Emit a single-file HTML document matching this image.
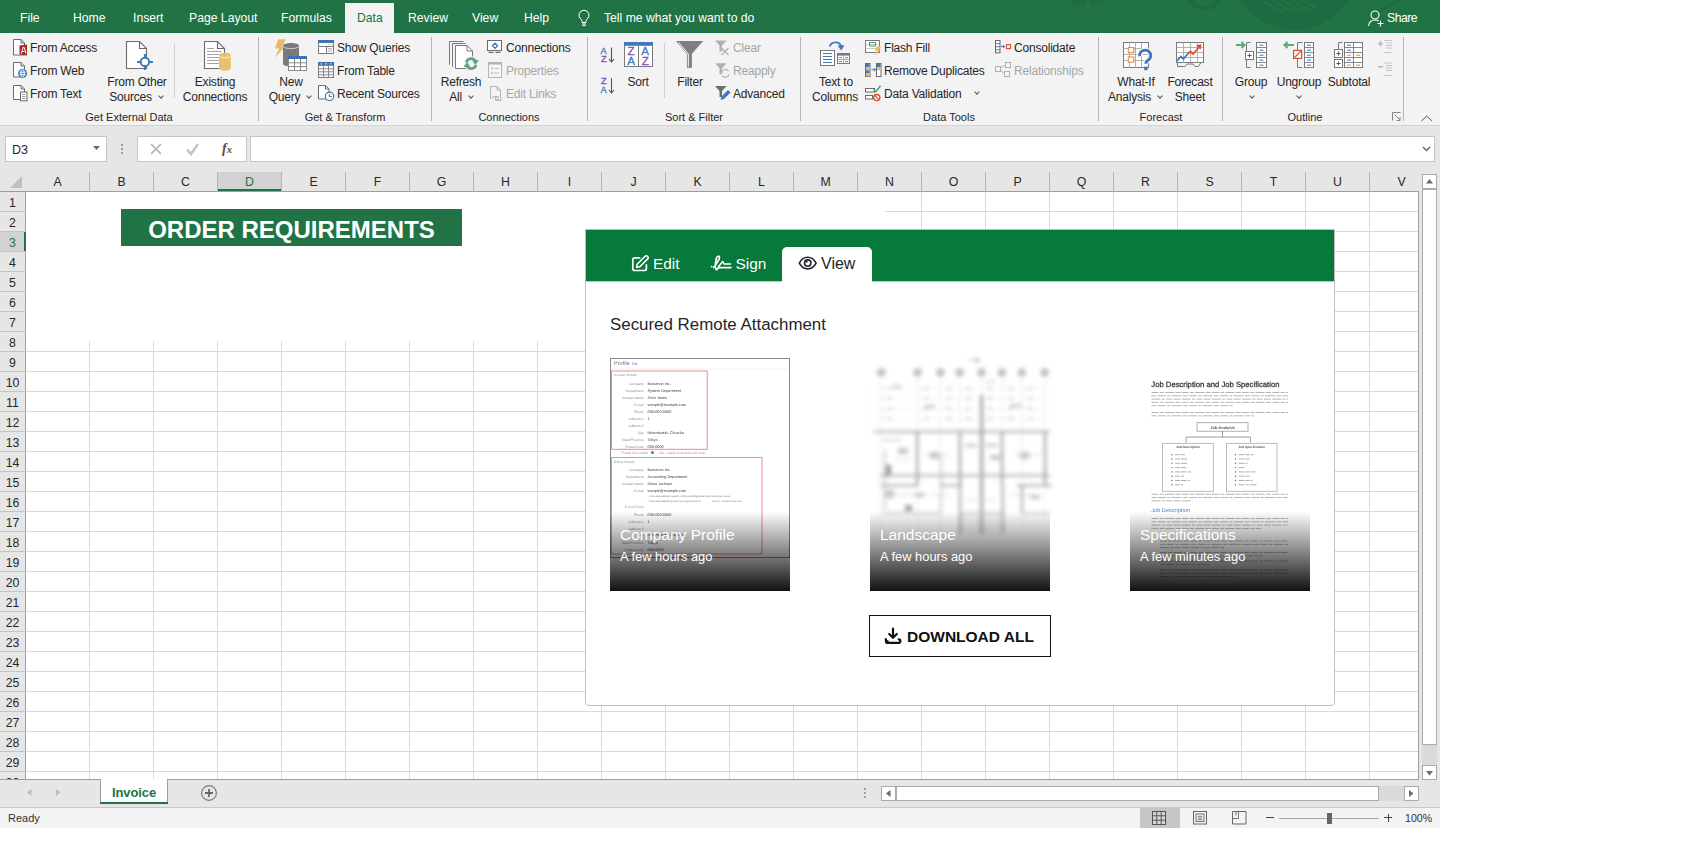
<!DOCTYPE html>
<html><head><meta charset="utf-8">
<style>
*{margin:0;padding:0;box-sizing:border-box}
html,body{width:1694px;height:863px;overflow:hidden;background:#fff;font-family:"Liberation Sans",sans-serif;color:#262626}
.a{position:absolute}
svg{position:absolute;overflow:visible}
#win{position:absolute;left:0;top:0;width:1440px;height:828px;background:#e6e6e6;overflow:hidden}
#tabbar{position:absolute;left:0;top:0;width:1440px;height:33px;background:#217346;overflow:hidden}
.tab{position:absolute;top:12px;font-size:12.2px;line-height:1;color:#fff;white-space:nowrap}
#ribbon{position:absolute;left:0;top:33px;width:1440px;height:93px;background:#f3f3f3;border-bottom:1px solid #d4d4d4}
.t{position:absolute;font-size:12px;letter-spacing:-0.2px;line-height:1;color:#262626;white-space:nowrap}
.c{position:absolute;width:120px;text-align:center;font-size:12px;letter-spacing:-0.2px;line-height:1;color:#262626;white-space:nowrap}
.dis{color:#a6a6a6}
.g{font-size:11px;letter-spacing:0}
.ch{position:absolute;top:176px;font-size:12.3px;line-height:1;text-align:center}
.rh{position:absolute;left:0;width:25px;padding-top:5px;font-size:12.3px;line-height:1;text-align:center}
.sep{position:absolute;top:37px;width:1px;height:84px;background:#b4b4b4}
.chev{display:inline-block;width:4px;height:4px;border-right:1px solid #555;border-bottom:1px solid #555;transform:rotate(45deg);margin-left:7px;position:relative;top:-3px}
.chv{position:absolute;width:4px;height:4px;border-right:1px solid #555;border-bottom:1px solid #555;transform:rotate(45deg)}
</style></head><body>
<div id="win">
 <div id="tabbar">
  <svg width="1440" height="33" style="left:0;top:0">
   <g fill="#1f6b41">
    <circle cx="1294" cy="-33.6" r="63.6"/>
    <rect x="1071" y="0" width="15" height="5"/>
    <rect x="1091" y="0" width="4" height="5"/>
    <rect x="1098" y="0" width="2" height="4"/>
    <rect x="1102" y="0" width="2" height="3"/>
   </g>
   <circle cx="1204.5" cy="-8.5" r="16.5" fill="none" stroke="#1f6b41" stroke-width="5"/>
   <g stroke="#217346" stroke-width="2.4">
    <line x1="1258" y1="-2" x2="1282" y2="12"/><line x1="1266" y1="-4" x2="1292" y2="12"/>
    <line x1="1274" y1="-4" x2="1302" y2="12"/><line x1="1284" y1="-4" x2="1310" y2="10"/><line x1="1294" y1="-4" x2="1316" y2="8"/>
   </g>
   <line x1="1402" y1="-1" x2="1380" y2="10" stroke="#1f6b41" stroke-width="3.5"/>
  </svg>
  <div class="tab" style="left:20px">File</div>
  <div class="tab" style="left:73px">Home</div>
  <div class="tab" style="left:133px">Insert</div>
  <div class="tab" style="left:189px">Page Layout</div>
  <div class="tab" style="left:281px">Formulas</div>
  <div class="a" style="left:345px;top:3px;width:49px;height:30px;background:#f3f3f3"></div>
  <div class="tab" style="left:357px;color:#217346">Data</div>
  <div class="tab" style="left:408px">Review</div>
  <div class="tab" style="left:472px">View</div>
  <div class="tab" style="left:524px">Help</div>
  <svg width="14" height="18" style="left:577px;top:9px" viewBox="0 0 14 18"><path d="M7 1.2a5 5 0 0 0-3 9c.6.5 1 1.2 1 2v1.3h4v-1.3c0-.8.4-1.5 1-2a5 5 0 0 0-3-9z" fill="none" stroke="#fff" stroke-width="1"/><path d="M5 15h4M5.5 16.6h3" stroke="#fff" stroke-width="1"/></svg>
  <div class="tab" style="left:604px">Tell me what you want to do</div>
  <svg width="18" height="18" style="left:1367px;top:9px" viewBox="0 0 18 18"><circle cx="8" cy="6" r="4" fill="none" stroke="#fff" stroke-width="1.1"/><path d="M1.5 17c.5-3.5 3-6 6.5-6 1.5 0 2.6.4 3.6 1" fill="none" stroke="#fff" stroke-width="1.1"/><path d="M13.5 11.5v6M10.5 14.5h6" stroke="#fff" stroke-width="1.1"/></svg>
  <div class="tab" style="left:1387px;letter-spacing:-0.5px">Share</div>
 </div>
 <div id="ribbon"></div>
 <!-- RIBBON_CONTENT -->
 <div class="sep" style="left:258px"></div>
 <div class="sep" style="left:431px"></div>
 <div class="sep" style="left:587px"></div>
 <div class="sep" style="left:800px"></div>
 <div class="sep" style="left:1098px"></div>
 <div class="sep" style="left:1222px"></div>
 <div class="sep" style="left:1403px"></div>
 <div class="a" style="left:174px;top:43px;width:1px;height:55px;background:#d0d0d0"></div>
 <div class="a" style="left:664px;top:43px;width:1px;height:55px;background:#d0d0d0"></div>
 <!-- Get External Data -->
 <div class="t" style="left:30px;top:41.5px">From Access</div>
 <div class="t" style="left:30px;top:64.6px">From Web</div>
 <div class="t" style="left:30px;top:88.3px">From Text</div>
 <div class="c" style="left:77px;top:75.6px">From Other</div>
 <div class="c" style="left:76px;top:91px">Sources<span class="chev"></span></div>
 <div class="c" style="left:155px;top:75.6px">Existing</div>
 <div class="c" style="left:155px;top:91px">Connections</div>
 <div class="c g" style="left:69px;top:111.5px">Get External Data</div>
 <!-- Get & Transform -->
 <div class="c" style="left:231px;top:75.6px">New</div>
 <div class="c" style="left:230px;top:91px">Query<span class="chev"></span></div>
 <div class="t" style="left:337px;top:41.5px">Show Queries</div>
 <div class="t" style="left:337px;top:64.6px">From Table</div>
 <div class="t" style="left:337px;top:88.3px">Recent Sources</div>
 <div class="c g" style="left:285px;top:111.5px">Get &amp; Transform</div>
 <!-- Connections -->
 <div class="c" style="left:401px;top:75.6px">Refresh</div>
 <div class="c" style="left:401px;top:91px">All<span class="chev"></span></div>
 <div class="t" style="left:506px;top:41.5px">Connections</div>
 <div class="t dis" style="left:506px;top:64.6px">Properties</div>
 <div class="t dis" style="left:506px;top:88.3px">Edit Links</div>
 <div class="c g" style="left:449px;top:111.5px">Connections</div>
 <!-- Sort & Filter -->
 <div class="c" style="left:578px;top:75.6px">Sort</div>
 <div class="c" style="left:630px;top:75.6px">Filter</div>
 <div class="t dis" style="left:733px;top:41.5px">Clear</div>
 <div class="t dis" style="left:733px;top:64.6px">Reapply</div>
 <div class="t" style="left:733px;top:88.3px">Advanced</div>
 <div class="c g" style="left:634px;top:111.5px">Sort &amp; Filter</div>
 <!-- Data Tools -->
 <div class="c" style="left:776px;top:75.6px">Text to</div>
 <div class="c" style="left:775px;top:91px">Columns</div>
 <div class="t" style="left:884px;top:41.5px">Flash Fill</div>
 <div class="t" style="left:884px;top:64.6px">Remove Duplicates</div>
 <div class="t" style="left:884px;top:88.3px">Data Validation</div>
 <div class="chv" style="left:975px;top:90px"></div>
 <div class="t" style="left:1014px;top:41.5px">Consolidate</div>
 <div class="t dis" style="left:1014px;top:64.6px">Relationships</div>
 <div class="c g" style="left:889px;top:111.5px">Data Tools</div>
 <!-- Forecast -->
 <div class="c" style="left:1076px;top:75.6px">What-If</div>
 <div class="c" style="left:1075px;top:91px">Analysis<span class="chev"></span></div>
 <div class="c" style="left:1130px;top:75.6px">Forecast</div>
 <div class="c" style="left:1130px;top:91px">Sheet</div>
 <div class="c g" style="left:1101px;top:111.5px">Forecast</div>
 <!-- Outline -->
 <div class="c" style="left:1191px;top:75.6px">Group</div>
 <div class="chv" style="left:1250px;top:94px"></div>
 <div class="c" style="left:1239px;top:75.6px">Ungroup</div>
 <div class="chv" style="left:1297px;top:94px"></div>
 <div class="c" style="left:1289px;top:75.6px">Subtotal</div>
 <div class="c g" style="left:1245px;top:111.5px">Outline</div>
<!-- /RIBBON_CONTENT -->
 <!-- ICONS -->
<svg width="1440" height="126" style="left:0;top:0" shape-rendering="geometricPrecision">
 <defs>
  <path id="doc" d="M0.5 0.5h7l3.5 3.5v11.5h-10.5z"/>
 </defs>
 <!-- From Access -->
 <path d="M13.5 39.5h7.5l3.5 3.5v12h-11z" fill="#fff" stroke="#6a6a6a"/><path d="M21 39.5v3.5h3.5" fill="none" stroke="#6a6a6a"/>
 <path d="M19.5 45.5l7.5-1v11l-7.5-1z" fill="#a4262c"/>
 <path d="M21.3 53.6l1.9-6.4h.9l1.9 6.4M22 51.5h2.4" fill="none" stroke="#fff" stroke-width="1"/>
 <!-- From Web -->
 <path d="M13.5 62.5h7.5l3.5 3.5v11h-11z" fill="#fff" stroke="#6a6a6a"/><path d="M21 62.5v3.5h3.5" fill="none" stroke="#6a6a6a"/>
 <circle cx="22.6" cy="73.4" r="4.6" fill="#4a86c5"/>
 <path d="M19.8 72.3h5.6M19.8 74.5h5.6" stroke="#fff" stroke-width="0.9"/><ellipse cx="22.6" cy="73.4" rx="1.8" ry="3.6" fill="none" stroke="#fff" stroke-width="0.9"/>
 <!-- From Text -->
 <path d="M13.5 85.5h7.5l3.5 3.5v10.5h-11z" fill="#fff" stroke="#6a6a6a"/><path d="M21 85.5v3.5h3.5" fill="none" stroke="#6a6a6a"/>
 <rect x="20.5" y="92" width="6.5" height="8.8" fill="#fff" stroke="#6a6a6a"/>
 <path d="M22 94.5h3.5M22 96.5h3.5M22 98.5h3.5" stroke="#8a8a8a" stroke-width="0.8"/>
 <!-- From Other Sources -->
 <path d="M126.5 41.5h13l7 7v20h-20z" fill="#fff" stroke="#6b6b6b" stroke-width="1.1"/><path d="M139.5 41.5v7h7" fill="none" stroke="#6b6b6b" stroke-width="1.1"/>
 <circle cx="144.9" cy="61.9" r="4.2" fill="#fff" stroke="#3f78b8" stroke-width="2"/>
 <path d="M137 61.9h3.2M149.6 61.9h3.3M144.9 54v3.2M144.9 66.5v3.4" stroke="#3f78b8" stroke-width="2"/>
 <!-- Existing Connections -->
 <path d="M204.5 41.5h13l7 7v20h-20z" fill="#fff" stroke="#6b6b6b" stroke-width="1.1"/><path d="M217.5 41.5v7h7" fill="none" stroke="#6b6b6b" stroke-width="1.1"/>
 <path d="M207 48.5h7M207 51.5h14.5M207 54.5h12M207 57.5h12M207 60.5h12M207 63.5h12" stroke="#9a9a9a" stroke-width="0.9"/>
 <path d="M219 55v13.5a5.9 2.2 0 0 0 11.8 0V55z" fill="#e8c170"/><ellipse cx="224.9" cy="55" rx="5.9" ry="2.2" fill="#e8c170"/>
 <path d="M219.2 56.2a5.9 2.2 0 0 0 11.4 0" fill="none" stroke="#fff" stroke-width="0.7"/>
 <!-- New Query -->
 <path d="M278.3 39.2h7.5l-4 7.8h2.8l-9.5 10.7 4-9.1h-4z" fill="#e8b968"/>
 <path d="M283 45.5v18.5a8 2.5 0 0 0 16 0V45.5z" fill="#7a7a7a"/><ellipse cx="291" cy="45.5" rx="8" ry="2.5" fill="#7a7a7a"/>
 <path d="M283.3 46.8a8 2.5 0 0 0 15.4 0" fill="none" stroke="#eee" stroke-width="0.7"/>
 <rect x="288" y="56" width="19" height="15" fill="#f3f3f3"/>
 <rect x="288.5" y="56.5" width="18" height="14" fill="#fff" stroke="#8a8a8a"/>
 <rect x="288" y="56" width="19" height="3" fill="#3f72b0"/>
 <path d="M294.5 59v11.5M300.5 59v11.5M288.5 62.8h18M288.5 66.6h18" stroke="#8a8a8a" stroke-width="1"/>
 <!-- Show Queries -->
 <rect x="318.5" y="40.5" width="15" height="13" fill="#fff" stroke="#7a7a7a"/>
 <rect x="318" y="40" width="16" height="3" fill="#3f72b0"/>
 <path d="M318.5 46.5h15M326.5 46.5v7" stroke="#7a7a7a"/>
 <path d="M328 44.8h.8M329.8 44.8h.8M331.6 44.8h.8M328 48.8h4M328 51h4" stroke="#8a8a8a" stroke-width="0.8"/>
 <!-- From Table -->
 <rect x="318.5" y="62.5" width="15" height="15" fill="#fff" stroke="#7a7a7a"/>
 <rect x="318" y="62" width="16" height="3.8" fill="#3f72b0"/>
 <path d="M320.5 63.9h1.6M325.2 63.9h1.6M329.9 63.9h1.6" stroke="#fff" stroke-width="0.9"/>
 <path d="M323.5 65.8v11.7M328.5 65.8v11.7M318.5 68.8h15M318.5 71.8h15M318.5 74.8h15" stroke="#8a8a8a" stroke-width="1"/>
 <!-- Recent Sources -->
 <path d="M318.5 85.5h7l3.5 3.5v10h-10.5z" fill="#fff" stroke="#6a6a6a"/><path d="M325.5 85.5v3.5h3.5" fill="none" stroke="#6a6a6a"/>
 <circle cx="329.5" cy="96.3" r="4.2" fill="#fff" stroke="#3f78b8" stroke-width="1.2"/>
 <path d="M329.3 93.8v2.8h2.6" fill="none" stroke="#555" stroke-width="0.9"/>
 <!-- Refresh All -->
 <path d="M449.5 64.8V41.5h14" fill="none" stroke="#7a7a7a" stroke-width="1"/>
 <path d="M452.5 66.8V43.5h13" fill="none" stroke="#7a7a7a" stroke-width="1"/>
 <path d="M455.5 45.5h11.5l5.5 5.5v17.5h-17z" fill="#fff" stroke="#7a7a7a"/><path d="M467 45.5v5.5h5.5" fill="none" stroke="#7a7a7a"/>
 <circle cx="471.2" cy="63.6" r="7.3" fill="#f3f3f3"/>
 <path d="M466.37 62.31A5.0 5.0 0 0 1 475.73 61.49" fill="none" stroke="#5fa584" stroke-width="2.6"/>
 <path d="M476.03 64.89A5.0 5.0 0 0 1 466.67 65.71" fill="none" stroke="#5fa584" stroke-width="2.6"/>
 <path d="M478.93 60.29L475.33 65.09L472.13 60.09z" fill="#5fa584"/>
 <path d="M463.47 66.91L467.07 62.11L470.27 67.11z" fill="#5fa584"/>
 <!-- Connections -->
 <rect x="487.5" y="40.5" width="14" height="10" fill="#fff" stroke="#6a6a6a"/>
 <path d="M488.5 52.3h5M495.5 52.3h5" stroke="#6a6a6a" stroke-width="1.2"/>
 <path d="M495 43.2l2.6 2.6-2.6 2.6-2.6-2.6z" fill="none" stroke="#3f78b8" stroke-width="1.3"/>
 <!-- Properties disabled -->
 <rect x="488.5" y="62.5" width="13" height="15" fill="#f6f4f6" stroke="#b4b4b4"/>
 <rect x="488" y="62" width="14" height="2.5" fill="#b4b4b4"/>
 <circle cx="492" cy="68.5" r="1" fill="#b4b4b4"/><circle cx="492" cy="73" r="1" fill="none" stroke="#b4b4b4" stroke-width="0.8"/>
 <path d="M494.5 68.5h4.5M494.5 73h4.5" stroke="#b4b4b4" stroke-width="0.9"/>
 <!-- Edit Links disabled -->
 <path d="M490.5 86.5h6.5l3.5 3.5v8" fill="none" stroke="#b4b4b4"/><path d="M490.5 86.5v12.5" stroke="#b4b4b4"/><path d="M497 86.5v3.5h3.5" fill="none" stroke="#b4b4b4"/>
 <path d="M492.5 98.5a2 2 0 0 1 2-2h2a2 2 0 0 1 0 4h-1M501.5 98.5a2 2 0 0 1-2 2h-2a2 2 0 0 1 0-4h1" fill="none" stroke="#b4b4b4" stroke-width="1.1"/>
 <!-- AZ sort -->
 <text x="600.6" y="53.8" font-family="Liberation Sans" font-size="9.3" fill="#3f78bd" stroke="#3f78bd" stroke-width="0.3">A</text>
 <text x="601" y="62" font-family="Liberation Sans" font-size="9.3" fill="#8e4db0" stroke="#8e4db0" stroke-width="0.3">Z</text>
 <path d="M611.5 47.5v14.2M609 59.2l2.5 2.8 2.5-2.8" fill="none" stroke="#555" stroke-width="1.1"/>
 <text x="601" y="84.3" font-family="Liberation Sans" font-size="9.3" fill="#8e4db0" stroke="#8e4db0" stroke-width="0.3">Z</text>
 <text x="600.6" y="93" font-family="Liberation Sans" font-size="9.3" fill="#3f78bd" stroke="#3f78bd" stroke-width="0.3">A</text>
 <path d="M611.5 78.3v14.4M609 90l2.5 2.8 2.5-2.8" fill="none" stroke="#555" stroke-width="1.1"/>
 <!-- Sort -->
 <rect x="624.5" y="42.5" width="28" height="24" fill="#fff" stroke="#7a7a7a"/>
 <rect x="624" y="42" width="29" height="3.8" fill="#3f78bd"/>
 <path d="M638.5 45.8v20.7" stroke="#7a7a7a"/>
 <text x="627.6" y="55.2" font-family="Liberation Sans" font-size="11.6" fill="#8e4db0" stroke="#8e4db0" stroke-width="0.3">Z</text>
 <text x="627.2" y="65.4" font-family="Liberation Sans" font-size="11.6" fill="#3f78bd" stroke="#3f78bd" stroke-width="0.3">A</text>
 <text x="641.3" y="55.2" font-family="Liberation Sans" font-size="11.6" fill="#3f78bd" stroke="#3f78bd" stroke-width="0.3">A</text>
 <text x="641.8" y="65.4" font-family="Liberation Sans" font-size="11.6" fill="#8e4db0" stroke="#8e4db0" stroke-width="0.3">Z</text>
 <!-- Filter -->
 <path d="M676 41h27.2l-11.3 12.8v14h-5v-14z" fill="#7f7f7f"/>
 <path d="M678.8 42.6l9.5 11.4v12.6" fill="none" stroke="#fff" stroke-width="1"/>
 <!-- Clear disabled -->
 <path d="M715 40.5h11.5l-4.5 5v6h-2.5v-6z" fill="#b0b0b0"/>
 <path d="M721.5 48l7 7M728.5 48l-7 7" stroke="#b0b0b0" stroke-width="1.2"/>
 <!-- Reapply disabled -->
 <path d="M715 63.3h11.5l-4.5 5v6h-2.5v-6z" fill="#b0b0b0"/>
 <path d="M721.7 72.5a3.8 3.8 0 0 1 6.8-1.5M729 74.2a3.8 3.8 0 0 1-6.8 1.5" fill="none" stroke="#b8b8b8" stroke-width="1.3"/>
 <!-- Advanced -->
 <path d="M715 86h11.5l-4.5 5v6h-2.5v-6z" fill="#6d6d6d"/>
 <path d="M720.5 100l1-3.5 6.5-6.5 2.5 2.5-6.5 6.5z" fill="#3f78bd"/>
 <!-- Text to Columns -->
 <rect x="820.5" y="50.5" width="14" height="15" fill="#fff" stroke="#7a7a7a"/>
 <path d="M823 53.5h9M823 56.5h9M823 59.5h9M823 62.5h9" stroke="#3f78bd" stroke-width="1"/>
 <rect x="837.5" y="53.5" width="12" height="10" fill="#fff" stroke="#7a7a7a"/>
 <rect x="837" y="53" width="13" height="2.6" fill="#7a7a7a"/>
 <path d="M843.5 55.6v8M837.5 59.5h12" stroke="#9a9a9a" stroke-width="0.8"/>
 <path d="M839 57.7h3M845 57.7h3M839 61.5h3M845 61.5h3" stroke="#3f78bd" stroke-width="0.9"/>
 <path d="M829.7 46.6a6 5.5 0 0 1 11.5 -0.5" fill="none" stroke="#3f78bd" stroke-width="1.8"/>
 <path d="M837.6 45.4l3.6 5.2 3.4-5.4z" fill="#3f78bd"/>
 <!-- Flash Fill -->
 <rect x="865.5" y="40.5" width="14" height="12" fill="#fff" stroke="#7a7a7a"/>
 <path d="M865.5 44.5h14M865.5 48.5h14" stroke="#bbb" stroke-width="0.8"/>
 <rect x="869.5" y="42.5" width="6" height="3.5" fill="none" stroke="#4e9a76" stroke-width="1"/>
 <path d="M876.6 46.2h4.6l-2.4 3.6h2.2l-6.6 5.6 2.4-4.3h-1.9z" fill="#e8c070"/>
 <!-- Remove Duplicates -->
 <rect x="865.5" y="63.5" width="4.5" height="13" fill="#fff" stroke="#6a6a6a"/>
 <rect x="866" y="64" width="3.5" height="3" fill="#3f78bd"/><rect x="866" y="67.2" width="3.5" height="3" fill="#e8b968"/><rect x="866" y="70.3" width="3.5" height="3" fill="#3f78bd"/><rect x="866" y="73.4" width="3.5" height="3" fill="#e8b968"/>
 <rect x="876.5" y="63.5" width="4.5" height="13" fill="#fff" stroke="#6a6a6a"/>
 <rect x="877" y="64" width="3.5" height="3" fill="#3f78bd"/><rect x="877" y="67.2" width="3.5" height="3" fill="#e8b968"/>
 <path d="M871.5 69.7h4M874 68l1.6 1.7-1.6 1.7" fill="none" stroke="#3f78bd" stroke-width="1"/>
 <!-- Data Validation -->
 <rect x="865.5" y="88.5" width="9" height="3.5" fill="#fff" stroke="#6a6a6a"/>
 <rect x="865.5" y="95.5" width="7" height="3.5" fill="#fff" stroke="#6a6a6a"/>
 <path d="M873.5 89.5l2.3 2.3 4.8-6" fill="none" stroke="#4e9a76" stroke-width="1.4"/>
 <circle cx="876.8" cy="97.6" r="3.1" fill="#fff" stroke="#d9512c" stroke-width="1.3"/><path d="M874.7 95.5l4.2 4.2" stroke="#d9512c" stroke-width="1.2"/>
 <!-- Consolidate -->
 <rect x="995.5" y="40.5" width="4.5" height="12.3" fill="#fff" stroke="#6a6a6a" stroke-width="1"/>
 <path d="M995.5 43.6h4.5M995.5 46.7h4.5M995.5 49.8h4.5" stroke="#6a6a6a" stroke-width="0.9"/>
 <path d="M1001 46.5h3.5M1003 45l1.6 1.5-1.6 1.5" fill="none" stroke="#3f78bd" stroke-width="1"/>
 <rect x="1006.5" y="44.6" width="4" height="4" fill="#fff" stroke="#d9512c" stroke-width="1.2"/>
 <!-- Relationships disabled -->
 <rect x="995.5" y="66.5" width="5" height="5" fill="#f6f4f6" stroke="#b0b0b0"/>
 <rect x="1005.5" y="62.5" width="5" height="5" fill="#f6f4f6" stroke="#b0b0b0"/>
 <rect x="1004.5" y="71.5" width="5" height="5" fill="#f6f4f6" stroke="#b0b0b0"/>
 <path d="M1000.5 68l5-3M1000.5 70.5l4 3" stroke="#b0b0b0" stroke-width="0.9"/>
 <!-- What-If -->
 <rect x="1123.5" y="42.5" width="25" height="25" fill="#fff" stroke="#7a7a7a"/>
 <path d="M1129.5 42.5v25M1135.5 42.5v25M1141.5 42.5v25M1123.5 48.5h25M1123.5 54.5h25M1123.5 60.5h25" stroke="#a8a8a8" stroke-width="0.9"/>
 <rect x="1128.3" y="47.5" width="5.5" height="5.2" fill="#fff" stroke="#e28a3c" stroke-width="1.1"/>
 <rect x="1128.3" y="57" width="5.5" height="5.2" fill="#fff" stroke="#e28a3c" stroke-width="1.1"/>
 <path d="M1139.6 56.2a5.6 5.4 0 1 1 8.6 3.9c-1.5 1-2.4 1.7-2.4 3.6" fill="none" stroke="#fff" stroke-width="5"/>
 <path d="M1139.6 56.2a5.6 5.4 0 1 1 8.6 3.9c-1.5 1-2.4 1.7-2.4 3.6" fill="none" stroke="#3f78bd" stroke-width="3"/>
 <rect x="1144.2" y="66.6" width="3.4" height="3.6" fill="#3f78bd"/>
 <!-- Forecast Sheet -->
 <rect x="1176.5" y="42.5" width="27" height="20" fill="#fff" stroke="#7a7a7a"/>
 <path d="M1183.5 42.5v20M1190.5 42.5v20M1197.5 42.5v20M1176.5 47.5h27M1176.5 52.5h27M1176.5 57.5h27" stroke="#a8a8a8" stroke-width="0.9"/>
 <path d="M1177.5 62.5v4h7.5l2-2.5h6l2 2.5h3.5l2.5-4" fill="none" stroke="#7a7a7a"/>
 <path d="M1177 61l4-4.5 2.5 2.5 4-5" fill="none" stroke="#3f78bd" stroke-width="1.8"/>
 <path d="M1187.5 54l3-2.5 2.5 2.5 7-8" fill="none" stroke="#d9512c" stroke-width="1.8"/>
 <path d="M1196 45.2l5.5-1 -0.8 5.5z" fill="#d9512c"/>
 <!-- Group -->
 <path d="M1236 45h8M1241.5 42l3 3-3 3" fill="none" stroke="#5fa584" stroke-width="2"/>
 <path d="M1250.5 42.5h-4v25h4" fill="none" stroke="#7a7a7a"/>
 <rect x="1245.5" y="51.5" width="8" height="8" fill="#fff" stroke="#7a7a7a"/>
 <path d="M1247.5 55.5h4M1249.5 53.5v4" stroke="#555"/>
 <rect x="1256.5" y="42.5" width="10" height="25" fill="#fff" stroke="#7a7a7a"/>
 <path d="M1256.5 47.5h10M1256.5 52.5h10M1256.5 57.5h10M1256.5 62.5h10" stroke="#7a7a7a" stroke-width="0.9"/>
 <path d="M1259.5 45.2h4M1259.5 50.2h4M1259.5 55.2h4M1259.5 60.2h4M1259.5 65.2h4" stroke="#3f78bd" stroke-width="1"/>
 <!-- Ungroup -->
 <path d="M1285 45h9M1287.5 42l-3 3 3 3" fill="none" stroke="#5fa584" stroke-width="2"/>
 <path d="M1302.5 42.5h-5v25h5" fill="none" stroke="#7a7a7a"/>
 <rect x="1293.6" y="50.4" width="8" height="8" fill="#fff" stroke="#d9512c" stroke-width="1.2"/>
 <path d="M1294.5 57.5l6.5-6.5" stroke="#d9512c" stroke-width="1.1"/>
 <rect x="1304.5" y="42.5" width="9" height="25" fill="#fff" stroke="#7a7a7a"/>
 <path d="M1304.5 47.5h9M1304.5 52.5h9M1304.5 57.5h9M1304.5 62.5h9" stroke="#7a7a7a" stroke-width="0.9"/>
 <path d="M1307 45.2h4M1307 50.2h4M1307 55.2h4M1307 60.2h4M1307 65.2h4" stroke="#3f78bd" stroke-width="1"/>
 <!-- Subtotal -->
 <path d="M1338.5 49.5v-7h4" fill="none" stroke="#7a7a7a"/>
 <rect x="1334.5" y="49.5" width="8" height="8" fill="#fff" stroke="#7a7a7a"/><path d="M1336.5 53.5h4M1338.5 51.5v4" stroke="#555"/>
 <rect x="1334.5" y="59.5" width="8" height="8" fill="#fff" stroke="#7a7a7a"/><path d="M1336.5 63.5h4M1338.5 61.5v4" stroke="#555"/>
 <rect x="1344.5" y="42.5" width="18" height="25" fill="#fff" stroke="#7a7a7a"/>
 <path d="M1353.5 42.5v25M1344.5 47.5h18M1344.5 52.5h18M1344.5 57.5h18M1344.5 62.5h18" stroke="#7a7a7a" stroke-width="0.9"/>
 <path d="M1347 45.2h4M1347 50.2h4M1347 60.2h4" stroke="#3f78bd" stroke-width="1"/>
 <path d="M1347 55.2h4M1356 55.2h4M1347 65.2h4M1356 65.2h4" stroke="#e28a3c" stroke-width="1"/>
 <!-- Show/Hide detail disabled -->
 <path d="M1378 43.8h5M1380.5 41.3v5" stroke="#b8b8b8" stroke-width="1.6"/>
 <path d="M1384 40.5h8M1386 43h6M1386 45.5h6M1386 48h6M1384 52.5h8" stroke="#c0c0c0" stroke-width="0.9"/>
 <path d="M1378 66.8h5" stroke="#b8b8b8" stroke-width="1.6"/>
 <path d="M1384 63h8M1386 65.5h6M1386 68h6M1386 70.5h6M1384 75.5h8" stroke="#c0c0c0" stroke-width="0.9"/>
 <!-- dialog launcher & collapse -->
 <path d="M1392.5 120.5v-8h8M1394.5 114.5l5.5 5.5M1400 117v3.5h-3.5" fill="none" stroke="#777" stroke-width="0.9"/>
 <path d="M1421.5 121l5.2-5 5.2 5" fill="none" stroke="#555" stroke-width="1"/>
</svg>
<!-- /ICONS -->
 <!-- FORMULA_BAR -->
 <!-- name box -->
 <div class="a" style="left:5px;top:136px;width:102px;height:26px;background:#fff;border:1px solid #c6c6c6"></div>
 <div class="a" style="left:12px;top:144px;font-size:12.5px;line-height:1;color:#262626">D3</div>
 <svg width="10" height="6" style="left:93px;top:146px"><path d="M0 0h7l-3.5 4z" fill="#6b6b6b"/></svg>
 <div class="a" style="left:121px;top:144px;width:2px;height:2px;background:#9a9a9a"></div>
 <div class="a" style="left:121px;top:148px;width:2px;height:2px;background:#9a9a9a"></div>
 <div class="a" style="left:121px;top:152px;width:2px;height:2px;background:#9a9a9a"></div>
 <div class="a" style="left:137px;top:136px;width:110px;height:26px;background:#fff;border:1px solid #c6c6c6"></div>
 <svg width="14" height="14" style="left:150px;top:143px"><path d="M1 1l10 10M11 1l-10 10" stroke="#b4b4b4" stroke-width="1.7"/></svg>
 <svg width="14" height="14" style="left:186px;top:143px"><path d="M1 6.5l4 4.5 7-10" fill="none" stroke="#c4c4c4" stroke-width="2.6"/></svg>
 <div class="a" style="left:222px;top:142px;font-family:'Liberation Serif',serif;font-style:italic;font-weight:bold;font-size:14px;line-height:1;color:#505050">f<span style="font-size:10.5px">x</span></div>
 <div class="a" style="left:250px;top:136px;width:1185px;height:26px;background:#fff;border:1px solid #c6c6c6"></div>
 <svg width="10" height="7" style="left:1422px;top:146px"><path d="M1 1l3.5 3.5L8 1" fill="none" stroke="#666" stroke-width="1.5"/></svg>
 <!-- column headers -->
 <div class="a" style="left:0;top:172px;width:1420px;height:20px;background:#e6e6e6;border-bottom:1px solid #9e9e9e"></div>
 <svg width="14" height="14" style="left:10px;top:176px"><path d="M12 0v12H0z" fill="#c0c0c0"/></svg>
 <div class="a" style="left:217px;top:172px;width:64px;height:19px;background:#d2d2d2"></div>
 <div class="a" style="left:217px;top:189px;width:65px;height:2px;background:#217346"></div>
 <div class="ch" style="left:26px;width:63px;color:#262626">A</div>
 <div class="a" style="left:89px;top:172px;width:1px;height:21px;background:#b4b4b4"></div>
 <div class="ch" style="left:90px;width:63px;color:#262626">B</div>
 <div class="a" style="left:153px;top:172px;width:1px;height:21px;background:#b4b4b4"></div>
 <div class="ch" style="left:154px;width:63px;color:#262626">C</div>
 <div class="a" style="left:217px;top:172px;width:1px;height:21px;background:#b4b4b4"></div>
 <div class="ch" style="left:218px;width:63px;color:#217346">D</div>
 <div class="a" style="left:281px;top:172px;width:1px;height:21px;background:#b4b4b4"></div>
 <div class="ch" style="left:282px;width:63px;color:#262626">E</div>
 <div class="a" style="left:345px;top:172px;width:1px;height:21px;background:#b4b4b4"></div>
 <div class="ch" style="left:346px;width:63px;color:#262626">F</div>
 <div class="a" style="left:409px;top:172px;width:1px;height:21px;background:#b4b4b4"></div>
 <div class="ch" style="left:410px;width:63px;color:#262626">G</div>
 <div class="a" style="left:473px;top:172px;width:1px;height:21px;background:#b4b4b4"></div>
 <div class="ch" style="left:474px;width:63px;color:#262626">H</div>
 <div class="a" style="left:537px;top:172px;width:1px;height:21px;background:#b4b4b4"></div>
 <div class="ch" style="left:538px;width:63px;color:#262626">I</div>
 <div class="a" style="left:601px;top:172px;width:1px;height:21px;background:#b4b4b4"></div>
 <div class="ch" style="left:602px;width:63px;color:#262626">J</div>
 <div class="a" style="left:665px;top:172px;width:1px;height:21px;background:#b4b4b4"></div>
 <div class="ch" style="left:666px;width:63px;color:#262626">K</div>
 <div class="a" style="left:729px;top:172px;width:1px;height:21px;background:#b4b4b4"></div>
 <div class="ch" style="left:730px;width:63px;color:#262626">L</div>
 <div class="a" style="left:793px;top:172px;width:1px;height:21px;background:#b4b4b4"></div>
 <div class="ch" style="left:794px;width:63px;color:#262626">M</div>
 <div class="a" style="left:857px;top:172px;width:1px;height:21px;background:#b4b4b4"></div>
 <div class="ch" style="left:858px;width:63px;color:#262626">N</div>
 <div class="a" style="left:921px;top:172px;width:1px;height:21px;background:#b4b4b4"></div>
 <div class="ch" style="left:922px;width:63px;color:#262626">O</div>
 <div class="a" style="left:985px;top:172px;width:1px;height:21px;background:#b4b4b4"></div>
 <div class="ch" style="left:986px;width:63px;color:#262626">P</div>
 <div class="a" style="left:1049px;top:172px;width:1px;height:21px;background:#b4b4b4"></div>
 <div class="ch" style="left:1050px;width:63px;color:#262626">Q</div>
 <div class="a" style="left:1113px;top:172px;width:1px;height:21px;background:#b4b4b4"></div>
 <div class="ch" style="left:1114px;width:63px;color:#262626">R</div>
 <div class="a" style="left:1177px;top:172px;width:1px;height:21px;background:#b4b4b4"></div>
 <div class="ch" style="left:1178px;width:63px;color:#262626">S</div>
 <div class="a" style="left:1241px;top:172px;width:1px;height:21px;background:#b4b4b4"></div>
 <div class="ch" style="left:1242px;width:63px;color:#262626">T</div>
 <div class="a" style="left:1305px;top:172px;width:1px;height:21px;background:#b4b4b4"></div>
 <div class="ch" style="left:1306px;width:63px;color:#262626">U</div>
 <div class="a" style="left:1369px;top:172px;width:1px;height:21px;background:#b4b4b4"></div>
 <div class="ch" style="left:1370px;width:63px;color:#262626">V</div>
 <!-- row headers -->
 <div class="a" style="left:0;top:192px;width:26px;height:587px;background:#e6e6e6;border-right:1px solid #9e9e9e"></div>
 <div class="a" style="left:0;top:232px;width:25px;height:19px;background:#d2d2d2"></div>
 <div class="a" style="left:24px;top:231px;width:2px;height:21px;background:#217346"></div>
 <div class="rh" style="top:192px;color:#262626">1</div>
 <div class="a" style="left:0;top:211px;width:26px;height:1px;background:#c4c4c4"></div>
 <div class="rh" style="top:212px;color:#262626">2</div>
 <div class="a" style="left:0;top:231px;width:26px;height:1px;background:#c4c4c4"></div>
 <div class="rh" style="top:232px;color:#217346">3</div>
 <div class="a" style="left:0;top:251px;width:26px;height:1px;background:#c4c4c4"></div>
 <div class="rh" style="top:252px;color:#262626">4</div>
 <div class="a" style="left:0;top:271px;width:26px;height:1px;background:#c4c4c4"></div>
 <div class="rh" style="top:272px;color:#262626">5</div>
 <div class="a" style="left:0;top:291px;width:26px;height:1px;background:#c4c4c4"></div>
 <div class="rh" style="top:292px;color:#262626">6</div>
 <div class="a" style="left:0;top:311px;width:26px;height:1px;background:#c4c4c4"></div>
 <div class="rh" style="top:312px;color:#262626">7</div>
 <div class="a" style="left:0;top:331px;width:26px;height:1px;background:#c4c4c4"></div>
 <div class="rh" style="top:332px;color:#262626">8</div>
 <div class="a" style="left:0;top:351px;width:26px;height:1px;background:#c4c4c4"></div>
 <div class="rh" style="top:352px;color:#262626">9</div>
 <div class="a" style="left:0;top:371px;width:26px;height:1px;background:#c4c4c4"></div>
 <div class="rh" style="top:372px;color:#262626">10</div>
 <div class="a" style="left:0;top:391px;width:26px;height:1px;background:#c4c4c4"></div>
 <div class="rh" style="top:392px;color:#262626">11</div>
 <div class="a" style="left:0;top:411px;width:26px;height:1px;background:#c4c4c4"></div>
 <div class="rh" style="top:412px;color:#262626">12</div>
 <div class="a" style="left:0;top:431px;width:26px;height:1px;background:#c4c4c4"></div>
 <div class="rh" style="top:432px;color:#262626">13</div>
 <div class="a" style="left:0;top:451px;width:26px;height:1px;background:#c4c4c4"></div>
 <div class="rh" style="top:452px;color:#262626">14</div>
 <div class="a" style="left:0;top:471px;width:26px;height:1px;background:#c4c4c4"></div>
 <div class="rh" style="top:472px;color:#262626">15</div>
 <div class="a" style="left:0;top:491px;width:26px;height:1px;background:#c4c4c4"></div>
 <div class="rh" style="top:492px;color:#262626">16</div>
 <div class="a" style="left:0;top:511px;width:26px;height:1px;background:#c4c4c4"></div>
 <div class="rh" style="top:512px;color:#262626">17</div>
 <div class="a" style="left:0;top:531px;width:26px;height:1px;background:#c4c4c4"></div>
 <div class="rh" style="top:532px;color:#262626">18</div>
 <div class="a" style="left:0;top:551px;width:26px;height:1px;background:#c4c4c4"></div>
 <div class="rh" style="top:552px;color:#262626">19</div>
 <div class="a" style="left:0;top:571px;width:26px;height:1px;background:#c4c4c4"></div>
 <div class="rh" style="top:572px;color:#262626">20</div>
 <div class="a" style="left:0;top:591px;width:26px;height:1px;background:#c4c4c4"></div>
 <div class="rh" style="top:592px;color:#262626">21</div>
 <div class="a" style="left:0;top:611px;width:26px;height:1px;background:#c4c4c4"></div>
 <div class="rh" style="top:612px;color:#262626">22</div>
 <div class="a" style="left:0;top:631px;width:26px;height:1px;background:#c4c4c4"></div>
 <div class="rh" style="top:632px;color:#262626">23</div>
 <div class="a" style="left:0;top:651px;width:26px;height:1px;background:#c4c4c4"></div>
 <div class="rh" style="top:652px;color:#262626">24</div>
 <div class="a" style="left:0;top:671px;width:26px;height:1px;background:#c4c4c4"></div>
 <div class="rh" style="top:672px;color:#262626">25</div>
 <div class="a" style="left:0;top:691px;width:26px;height:1px;background:#c4c4c4"></div>
 <div class="rh" style="top:692px;color:#262626">26</div>
 <div class="a" style="left:0;top:711px;width:26px;height:1px;background:#c4c4c4"></div>
 <div class="rh" style="top:712px;color:#262626">27</div>
 <div class="a" style="left:0;top:731px;width:26px;height:1px;background:#c4c4c4"></div>
 <div class="rh" style="top:732px;color:#262626">28</div>
 <div class="a" style="left:0;top:751px;width:26px;height:1px;background:#c4c4c4"></div>
 <div class="rh" style="top:752px;color:#262626">29</div>
 <div class="a" style="left:0;top:771px;width:26px;height:1px;background:#c4c4c4"></div>
 <div class="rh" style="top:772px;color:#262626">30</div>
 <div class="a" style="left:0;top:791px;width:26px;height:1px;background:#c4c4c4"></div>
 <!-- grid -->
 <div class="a" style="left:26px;top:192px;width:1393px;height:587px;background-color:#fff;background-image:linear-gradient(to right,#d9d9d9 1px,transparent 1px),linear-gradient(to bottom,#d9d9d9 1px,transparent 1px);background-size:64px 20px;background-position:63px 19px"></div>
 <div class="a" style="left:26px;top:192px;width:859px;height:149px;background:#fff"></div>
 <div class="a" style="left:1418px;top:192px;width:1px;height:587px;background:#9e9e9e"></div>
<!-- /FORMULA_BAR -->
 <!-- GRID -->
 <!-- BOTTOM -->
 <!-- vertical scrollbar -->
 <div class="a" style="left:1419px;top:172px;width:21px;height:608px;background:#e6e6e6"></div>
 <div class="a" style="left:1422px;top:189px;width:15px;height:576px;background:#dadada"></div>
 <div class="a" style="left:1422px;top:174px;width:15px;height:15px;background:#fff;border:1px solid #ababab"></div>
 <svg width="8" height="5" style="left:1426px;top:179px"><path d="M0 4.5L3.5 0 7 4.5z" fill="#6b6b6b"/></svg>
 <div class="a" style="left:1422px;top:188px;width:15px;height:557px;background:#fff;border:1px solid #ababab;border-top:2px solid #ababab"></div>
 <div class="a" style="left:1422px;top:765px;width:15px;height:15px;background:#fff;border:1px solid #ababab"></div>
 <svg width="8" height="5" style="left:1426px;top:771px"><path d="M0 0h7L3.5 4.5z" fill="#6b6b6b"/></svg>
 <!-- grid bottom border -->
 <div class="a" style="left:0;top:779px;width:1419px;height:1px;background:#9e9e9e"></div>
 <!-- sheet tab bar -->
 <div class="a" style="left:0;top:780px;width:1440px;height:27px;background:#e6e6e6"></div>
 <div class="a" style="left:0;top:807px;width:1440px;height:1px;background:#c8c8c8"></div>
 <svg width="6" height="8" style="left:27px;top:789px"><path d="M4.5 0v7L0 3.5z" fill="#bdbdbd"/></svg>
 <svg width="6" height="8" style="left:56px;top:789px"><path d="M0 0v7l4.5-3.5z" fill="#bdbdbd"/></svg>
 <div class="a" style="left:100px;top:779px;width:68px;height:25px;background:#fff;border-left:1px solid #9e9e9e;border-right:1px solid #9e9e9e"></div>
 <div class="a" style="left:100px;top:802px;width:68px;height:2px;background:#217346"></div>
 <div class="a" style="left:112px;top:786px;font-size:13px;font-weight:bold;line-height:1;color:#217346;letter-spacing:-0.1px">Invoice</div>
 <svg width="20" height="20" style="left:199px;top:783px"><circle cx="10" cy="10" r="7.4" fill="none" stroke="#777" stroke-width="1.1"/><path d="M6 10h8M10 6v8" stroke="#666" stroke-width="1.8"/></svg>
 <div class="a" style="left:864px;top:788px;width:2px;height:2px;background:#a0a0a0"></div>
 <div class="a" style="left:864px;top:792px;width:2px;height:2px;background:#a0a0a0"></div>
 <div class="a" style="left:864px;top:796px;width:2px;height:2px;background:#a0a0a0"></div>
 <!-- horizontal scrollbar -->
 <div class="a" style="left:881px;top:786px;width:538px;height:15px;background:#dadada"></div>
 <div class="a" style="left:881px;top:786px;width:15px;height:15px;background:#fff;border:1px solid #ababab"></div>
 <svg width="5" height="8" style="left:886px;top:790px"><path d="M4.5 0v7L0 3.5z" fill="#6b6b6b"/></svg>
 <div class="a" style="left:895px;top:786px;width:484px;height:15px;background:#fff;border:1px solid #ababab;border-left:2px solid #ababab"></div>
 <div class="a" style="left:1404px;top:786px;width:15px;height:15px;background:#fff;border:1px solid #ababab"></div>
 <svg width="5" height="8" style="left:1409px;top:790px"><path d="M0 0v7l4.5-3.5z" fill="#6b6b6b"/></svg>
 <!-- status bar -->
 <div class="a" style="left:0;top:808px;width:1440px;height:20px;background:#f3f3f3"></div>
 <div class="a" style="left:8px;top:812.5px;font-size:11px;line-height:1;color:#333">Ready</div>
 <div class="a" style="left:1140px;top:808px;width:40px;height:20px;background:#c6c6c6"></div>
 <svg width="15" height="15" style="left:1152px;top:811px"><rect x="0.5" y="0.5" width="13" height="13" fill="#d6d6d6" stroke="#555" stroke-width="1"/><path d="M4.8 0.5v13M9.2 0.5v13M0.5 4.8h13M0.5 9.2h13" stroke="#555" stroke-width="1"/></svg>
 <svg width="15" height="14" style="left:1193px;top:811px"><rect x="0.5" y="0.5" width="13" height="12.5" fill="none" stroke="#666"/><rect x="3" y="3" width="8" height="7.5" fill="none" stroke="#666" stroke-width="0.9"/><path d="M4.8 5.3h4.4M4.8 7h4.4M4.8 8.6h4.4" stroke="#666" stroke-width="0.8"/></svg>
 <svg width="15" height="14" style="left:1232px;top:811px"><path d="M0.5 0.5h13.5v12.5H0.5z" fill="none" stroke="#666"/><path d="M0.5 7.5h6v-7M4 0.5v4" fill="none" stroke="#666" stroke-width="0.9"/></svg>
 <div class="a" style="left:1266px;top:817px;width:8px;height:1px;background:#444"></div>
 <div class="a" style="left:1279px;top:818px;width:100px;height:1px;background:#a8a8a8"></div>
 <div class="a" style="left:1327px;top:813px;width:4.5px;height:11px;background:#666"></div>
 <div class="a" style="left:1384px;top:817px;width:8px;height:1px;background:#444"></div>
 <div class="a" style="left:1387.5px;top:813.5px;width:1px;height:8px;background:#444"></div>
 <div class="a" style="left:1405px;top:813px;font-size:10.6px;line-height:1;color:#333">100%</div>
<!-- /BOTTOM -->
</div>
<!-- MODAL -->
<!-- ORDER REQUIREMENTS -->
<div class="a" style="left:121px;top:209px;width:341px;height:37px;background:#217346"></div>
<div class="a" style="left:121px;top:218.4px;width:341px;text-align:center;font-size:24px;font-weight:bold;line-height:1;color:#fff;white-space:nowrap">ORDER REQUIREMENTS</div>
<!-- modal -->
<div class="a" style="left:585px;top:229px;width:750px;height:477px;background:#fff;border:1px solid #bdbdbd;border-radius:1px 1px 4px 4px;overflow:hidden">
 <div class="a" style="left:0;top:0;width:748px;height:52px;background:#06793b;border-bottom:1px solid #b5cdbd"></div>
</div>
<div class="a" style="left:782px;top:247px;width:90px;height:35px;background:#fff;border-radius:5px 5px 0 0"></div>
<svg width="20" height="20" style="left:631px;top:255px" viewBox="0 0 20 20"><path d="M9.3 2.9H3.8a2 2 0 0 0-2 2v8.6a2 2 0 0 0 2 2h9.6a2 2 0 0 0 2-2V9.3" fill="none" stroke="#fff" stroke-width="1.7"/><path d="M5.6 12.4l.6-3.2 7.9-7.9a1.6 1.6 0 0 1 2.3 0l.3.3a1.6 1.6 0 0 1 0 2.3l-7.9 7.9z" fill="none" stroke="#fff" stroke-width="1.6" stroke-linejoin="round"/></svg>
<div class="a" style="left:653px;top:256px;font-size:15.4px;line-height:1;color:#fff">Edit</div>
<svg width="24" height="18" style="left:710px;top:255px" viewBox="0 0 24 18"><circle cx="1.6" cy="11.6" r="0.9" fill="#fff"/><path d="M3.5 12.5C6 10 9.5 4 9.5 2.5 9.5.5 7 1 6.5 3 5.5 7 5 12 5.8 14 6.5 16 8.5 13 9 11" fill="none" stroke="#fff" stroke-width="1.7" stroke-linecap="round"/><path d="M9 11c1.5-2 3-4 4-4.5.5 1.5.5 2.5 1.5 2.5h6" fill="none" stroke="#fff" stroke-width="1.6" stroke-linecap="round" stroke-linejoin="round"/><path d="M8.5 12.6H21" stroke="#fff" stroke-width="1.6" stroke-linecap="round"/></svg>
<div class="a" style="left:735.5px;top:256px;font-size:15.4px;line-height:1;color:#fff">Sign</div>
<svg width="20" height="16" style="left:798px;top:255px" viewBox="0 0 20 16"><path d="M1.3 8.1C3.3 4.4 6.3 2.3 9.7 2.3s6.4 2.1 8.4 5.8c-2 3.7-5 5.8-8.4 5.8s-6.4-2.1-8.4-5.8z" fill="none" stroke="#212529" stroke-width="1.6"/><circle cx="9.7" cy="8.1" r="3.2" fill="none" stroke="#212529" stroke-width="1.6"/><circle cx="8.6" cy="6.8" r="1" fill="#212529"/></svg>
<div class="a" style="left:821px;top:256px;font-size:16px;line-height:1;color:#212529">View</div>
<div class="a" style="left:610px;top:317px;font-size:16.9px;line-height:1;color:#212529;white-space:nowrap">Secured Remote Attachment</div>
<!-- CARDS -->
<svg width="180" height="233" style="left:610px;top:358px" viewBox="610 358 180 233">
<defs><filter id="bl1" x="-5%" y="-5%" width="110%" height="110%"><feGaussianBlur stdDeviation="0.4"/></filter><linearGradient id="gr" x1="0" y1="0" x2="0" y2="1"><stop offset="0" stop-color="#000" stop-opacity="0"/><stop offset="1" stop-color="#000" stop-opacity="0.93"/></linearGradient></defs>
<rect x="610" y="358" width="180" height="233" fill="#fff"/>
<g filter="url(#bl1)">
<rect x="610.5" y="358.5" width="179" height="199" fill="#fff" stroke="#8a8a8a" stroke-width="1"/>
<text text-rendering="geometricPrecision" x="614" y="365.4" font-family="Liberation Sans" font-size="5.6" fill="#777" text-anchor="start" font-weight="normal">Profile</text>
<text text-rendering="geometricPrecision" x="632" y="365.2" font-family="Liberation Sans" font-size="3.2" fill="#3b8ad8" text-anchor="start" font-weight="normal">Edit</text>
<path d="M612 369h176" stroke="#eee" stroke-width="0.8"/>
<rect x="611.5" y="371" width="95.7" height="78.3" fill="none" stroke="#f28b8b" stroke-width="1"/>
<text text-rendering="geometricPrecision" x="614" y="375.5" font-family="Liberation Sans" font-size="3.4" fill="#999" text-anchor="start" font-weight="normal">Contact Details</text>
<text text-rendering="geometricPrecision" x="643.7" y="384.5" font-family="Liberation Sans" font-size="3.4" fill="#8c8c8c" text-anchor="end" font-weight="normal">Company</text>
<text text-rendering="geometricPrecision" x="647.6" y="384.5" font-family="Liberation Sans" font-size="3.8" fill="#3c3c3c" text-anchor="start" font-weight="normal">Bozuman Inc.</text>
<text text-rendering="geometricPrecision" x="643.7" y="391.5" font-family="Liberation Sans" font-size="3.4" fill="#8c8c8c" text-anchor="end" font-weight="normal">Department</text>
<text text-rendering="geometricPrecision" x="647.6" y="391.5" font-family="Liberation Sans" font-size="3.8" fill="#3c3c3c" text-anchor="start" font-weight="normal">System Department</text>
<text text-rendering="geometricPrecision" x="643.7" y="398.5" font-family="Liberation Sans" font-size="3.4" fill="#8c8c8c" text-anchor="end" font-weight="normal">Contact Name</text>
<text text-rendering="geometricPrecision" x="647.6" y="398.5" font-family="Liberation Sans" font-size="3.8" fill="#3c3c3c" text-anchor="start" font-weight="normal">Jhon Jones</text>
<text text-rendering="geometricPrecision" x="643.7" y="405.5" font-family="Liberation Sans" font-size="3.4" fill="#8c8c8c" text-anchor="end" font-weight="normal">E-mail</text>
<text text-rendering="geometricPrecision" x="647.6" y="405.5" font-family="Liberation Sans" font-size="3.8" fill="#3c3c3c" text-anchor="start" font-weight="normal">sample@example.com</text>
<text text-rendering="geometricPrecision" x="643.7" y="412.5" font-family="Liberation Sans" font-size="3.4" fill="#8c8c8c" text-anchor="end" font-weight="normal">Phone</text>
<text text-rendering="geometricPrecision" x="647.6" y="412.5" font-family="Liberation Sans" font-size="3.8" fill="#3c3c3c" text-anchor="start" font-weight="normal">000-000-0000</text>
<text text-rendering="geometricPrecision" x="643.7" y="419.5" font-family="Liberation Sans" font-size="3.4" fill="#8c8c8c" text-anchor="end" font-weight="normal">Address 1</text>
<text text-rendering="geometricPrecision" x="647.6" y="419.5" font-family="Liberation Sans" font-size="3.8" fill="#3c3c3c" text-anchor="start" font-weight="normal">1</text>
<text text-rendering="geometricPrecision" x="643.7" y="426.5" font-family="Liberation Sans" font-size="3.4" fill="#8c8c8c" text-anchor="end" font-weight="normal">Address 2</text>
<text text-rendering="geometricPrecision" x="647.6" y="426.5" font-family="Liberation Sans" font-size="3.8" fill="#3c3c3c" text-anchor="start" font-weight="normal"></text>
<text text-rendering="geometricPrecision" x="643.7" y="433.5" font-family="Liberation Sans" font-size="3.4" fill="#8c8c8c" text-anchor="end" font-weight="normal">City</text>
<text text-rendering="geometricPrecision" x="647.6" y="433.5" font-family="Liberation Sans" font-size="3.8" fill="#3c3c3c" text-anchor="start" font-weight="normal">Nihombashi, Chuo-ku</text>
<text text-rendering="geometricPrecision" x="643.7" y="440.5" font-family="Liberation Sans" font-size="3.4" fill="#8c8c8c" text-anchor="end" font-weight="normal">State/Province</text>
<text text-rendering="geometricPrecision" x="647.6" y="440.5" font-family="Liberation Sans" font-size="3.8" fill="#3c3c3c" text-anchor="start" font-weight="normal">Tokyo</text>
<text text-rendering="geometricPrecision" x="643.7" y="447.5" font-family="Liberation Sans" font-size="3.4" fill="#8c8c8c" text-anchor="end" font-weight="normal">Postal Code</text>
<text text-rendering="geometricPrecision" x="647.6" y="447.5" font-family="Liberation Sans" font-size="3.8" fill="#3c3c3c" text-anchor="start" font-weight="normal">000-0000</text>
<text text-rendering="geometricPrecision" x="648" y="453.8" font-family="Liberation Sans" font-size="3.4" fill="#999" text-anchor="end" font-weight="normal">Postal Direct Mail</text>
<circle cx="652.5" cy="452.5" r="1.5" fill="#3b7bd8"/>
<text text-rendering="geometricPrecision" x="659" y="453.8" font-family="Liberation Sans" font-size="3.2" fill="#999" text-anchor="start" font-weight="normal">Yes, I agree to receive such mail.</text>
<rect x="611.5" y="457.5" width="150.5" height="96.5" fill="none" stroke="#f28b8b" stroke-width="1"/>
<text text-rendering="geometricPrecision" x="614" y="462.5" font-family="Liberation Sans" font-size="3.4" fill="#999" text-anchor="start" font-weight="normal">Billing Details</text>
<text text-rendering="geometricPrecision" x="643.7" y="471.3" font-family="Liberation Sans" font-size="3.4" fill="#8c8c8c" text-anchor="end" font-weight="normal">Company</text>
<text text-rendering="geometricPrecision" x="647.6" y="471.3" font-family="Liberation Sans" font-size="3.8" fill="#3c3c3c" text-anchor="start" font-weight="normal">Bozuman Inc.</text>
<text text-rendering="geometricPrecision" x="643.7" y="478.3" font-family="Liberation Sans" font-size="3.4" fill="#8c8c8c" text-anchor="end" font-weight="normal">Department</text>
<text text-rendering="geometricPrecision" x="647.6" y="478.3" font-family="Liberation Sans" font-size="3.8" fill="#3c3c3c" text-anchor="start" font-weight="normal">Accounting Department</text>
<text text-rendering="geometricPrecision" x="643.7" y="485.3" font-family="Liberation Sans" font-size="3.4" fill="#8c8c8c" text-anchor="end" font-weight="normal">Contact Name</text>
<text text-rendering="geometricPrecision" x="647.6" y="485.3" font-family="Liberation Sans" font-size="3.8" fill="#3c3c3c" text-anchor="start" font-weight="normal">Maria Jackson</text>
<text text-rendering="geometricPrecision" x="643.7" y="492" font-family="Liberation Sans" font-size="3.4" fill="#8c8c8c" text-anchor="end" font-weight="normal">E-mail</text>
<text text-rendering="geometricPrecision" x="647.6" y="492" font-family="Liberation Sans" font-size="3.8" fill="#3c3c3c" text-anchor="start" font-weight="normal">sample@example.com</text>
<text text-rendering="geometricPrecision" x="647.6" y="497.4" font-family="Liberation Sans" font-size="2.3" fill="#666" text-anchor="start" font-weight="normal">* This e-mail address is used to notify your billing details and to send your invoice.</text>
<text text-rendering="geometricPrecision" x="647.6" y="501.5" font-family="Liberation Sans" font-size="2.3" fill="#666" text-anchor="start" font-weight="normal">* This e-mail address becomes your login account of</text>
<text text-rendering="geometricPrecision" x="712" y="501.5" font-family="Liberation Sans" font-size="2.3" fill="#3b8ad8" text-anchor="start" font-weight="normal">Money Forward Recept Inbox</text>
<text text-rendering="geometricPrecision" x="643.7" y="507.8" font-family="Liberation Sans" font-size="3.4" fill="#999" text-anchor="end" font-weight="normal">E-mail (Sub)</text>
<text text-rendering="geometricPrecision" x="643.7" y="516.2" font-family="Liberation Sans" font-size="3.4" fill="#8c8c8c" text-anchor="end" font-weight="normal">Phone</text>
<text text-rendering="geometricPrecision" x="647.6" y="516.2" font-family="Liberation Sans" font-size="3.8" fill="#3c3c3c" text-anchor="start" font-weight="normal">000-000-0000</text>
<text text-rendering="geometricPrecision" x="643.7" y="523" font-family="Liberation Sans" font-size="3.4" fill="#8c8c8c" text-anchor="end" font-weight="normal">Address 1</text>
<text text-rendering="geometricPrecision" x="647.6" y="523" font-family="Liberation Sans" font-size="3.8" fill="#3c3c3c" text-anchor="start" font-weight="normal">1</text>
<text text-rendering="geometricPrecision" x="643.7" y="529.7" font-family="Liberation Sans" font-size="3.4" fill="#8c8c8c" text-anchor="end" font-weight="normal">Address 2</text>
<text text-rendering="geometricPrecision" x="647.6" y="529.7" font-family="Liberation Sans" font-size="3.8" fill="#3c3c3c" text-anchor="start" font-weight="normal"></text>
<text text-rendering="geometricPrecision" x="643.7" y="536.2" font-family="Liberation Sans" font-size="3.4" fill="#8c8c8c" text-anchor="end" font-weight="normal">City</text>
<text text-rendering="geometricPrecision" x="647.6" y="536.2" font-family="Liberation Sans" font-size="3.8" fill="#3c3c3c" text-anchor="start" font-weight="normal">Nihombashi, Chuo-ku</text>
<text text-rendering="geometricPrecision" x="643.7" y="543.8" font-family="Liberation Sans" font-size="3.4" fill="#8c8c8c" text-anchor="end" font-weight="normal">State/Province</text>
<text text-rendering="geometricPrecision" x="647.6" y="543.8" font-family="Liberation Sans" font-size="3.8" fill="#3c3c3c" text-anchor="start" font-weight="normal">Tokyo</text>
<text text-rendering="geometricPrecision" x="643.7" y="550.7" font-family="Liberation Sans" font-size="3.4" fill="#8c8c8c" text-anchor="end" font-weight="normal">Postal Code</text>
<text text-rendering="geometricPrecision" x="647.6" y="550.7" font-family="Liberation Sans" font-size="3.8" fill="#3c3c3c" text-anchor="start" font-weight="normal">000-0000</text>
</g>
<rect x="610" y="511" width="180" height="80" fill="url(#gr)"/>
</svg>
<svg width="180" height="233" style="left:870px;top:358px" viewBox="870 358 180 233">
<defs><filter id="bl2" x="-5%" y="-5%" width="110%" height="110%"><feGaussianBlur stdDeviation="2"/></filter></defs>
<rect x="870" y="358" width="180" height="233" fill="#fff"/>
<g filter="url(#bl2)">
<circle cx="881.3" cy="372.5" r="4.2" fill="#bdbdbd"/>
<path d="M881.3 376v155" stroke="#e2e2e2" stroke-width="0.8"/>
<circle cx="917.5" cy="372.5" r="4.2" fill="#bdbdbd"/>
<path d="M917.5 376v155" stroke="#e2e2e2" stroke-width="0.8"/>
<circle cx="940.5" cy="372.5" r="4.2" fill="#bdbdbd"/>
<path d="M940.5 376v155" stroke="#e2e2e2" stroke-width="0.8"/>
<circle cx="959.6" cy="372.5" r="4.2" fill="#bdbdbd"/>
<path d="M959.6 376v155" stroke="#e2e2e2" stroke-width="0.8"/>
<circle cx="981.5" cy="372.5" r="4.2" fill="#bdbdbd"/>
<path d="M981.5 376v155" stroke="#e2e2e2" stroke-width="0.8"/>
<circle cx="1002" cy="372.5" r="4.2" fill="#bdbdbd"/>
<path d="M1002 376v155" stroke="#e2e2e2" stroke-width="0.8"/>
<circle cx="1021.8" cy="372.5" r="4.2" fill="#bdbdbd"/>
<path d="M1021.8 376v155" stroke="#e2e2e2" stroke-width="0.8"/>
<circle cx="1044.6" cy="372.5" r="4.2" fill="#bdbdbd"/>
<path d="M1044.6 376v155" stroke="#e2e2e2" stroke-width="0.8"/>
<path d="M974 359h6l-3 3z" fill="#777"/><path d="M968 359.5h6" stroke="#bbb" stroke-width="0.8"/>
<path d="M990 378l5 6M986 381l3 4" stroke="#aaa" stroke-width="1"/>
<path d="M870 389h180" stroke="#ececec" stroke-width="0.8"/>
<rect x="887.3" y="387.5" width="5" height="2.2" fill="#cdcdcd"/>
<rect x="923.5" y="387.5" width="5" height="2.2" fill="#cdcdcd"/>
<rect x="946.5" y="387.5" width="5" height="2.2" fill="#cdcdcd"/>
<rect x="965.6" y="387.5" width="5" height="2.2" fill="#cdcdcd"/>
<rect x="987.5" y="387.5" width="5" height="2.2" fill="#cdcdcd"/>
<rect x="1008" y="387.5" width="5" height="2.2" fill="#cdcdcd"/>
<rect x="1027.8" y="387.5" width="5" height="2.2" fill="#cdcdcd"/>
<path d="M870 398.6h180" stroke="#ececec" stroke-width="0.8"/>
<rect x="887.3" y="397.1" width="5" height="2.2" fill="#cdcdcd"/>
<rect x="923.5" y="397.1" width="5" height="2.2" fill="#cdcdcd"/>
<rect x="946.5" y="397.1" width="5" height="2.2" fill="#cdcdcd"/>
<rect x="965.6" y="397.1" width="5" height="2.2" fill="#cdcdcd"/>
<rect x="987.5" y="397.1" width="5" height="2.2" fill="#cdcdcd"/>
<rect x="1008" y="397.1" width="5" height="2.2" fill="#cdcdcd"/>
<rect x="1027.8" y="397.1" width="5" height="2.2" fill="#cdcdcd"/>
<path d="M870 409h180" stroke="#ececec" stroke-width="0.8"/>
<rect x="887.3" y="407.5" width="5" height="2.2" fill="#cdcdcd"/>
<rect x="923.5" y="407.5" width="5" height="2.2" fill="#cdcdcd"/>
<rect x="946.5" y="407.5" width="5" height="2.2" fill="#cdcdcd"/>
<rect x="965.6" y="407.5" width="5" height="2.2" fill="#cdcdcd"/>
<rect x="987.5" y="407.5" width="5" height="2.2" fill="#cdcdcd"/>
<rect x="1008" y="407.5" width="5" height="2.2" fill="#cdcdcd"/>
<rect x="1027.8" y="407.5" width="5" height="2.2" fill="#cdcdcd"/>
<path d="M870 419h180" stroke="#ececec" stroke-width="0.8"/>
<rect x="887.3" y="417.5" width="5" height="2.2" fill="#cdcdcd"/>
<rect x="923.5" y="417.5" width="5" height="2.2" fill="#cdcdcd"/>
<rect x="946.5" y="417.5" width="5" height="2.2" fill="#cdcdcd"/>
<rect x="965.6" y="417.5" width="5" height="2.2" fill="#cdcdcd"/>
<rect x="987.5" y="417.5" width="5" height="2.2" fill="#cdcdcd"/>
<rect x="1008" y="417.5" width="5" height="2.2" fill="#cdcdcd"/>
<rect x="1027.8" y="417.5" width="5" height="2.2" fill="#cdcdcd"/>
<path d="M874 431.7h176" stroke="#a8a8a8" stroke-width="2"/>
<path d="M917.3 431v54" stroke="#9c9c9c" stroke-width="2.2"/>
<path d="M960 431v54" stroke="#9c9c9c" stroke-width="2.2"/>
<path d="M1002 431v54" stroke="#9c9c9c" stroke-width="2.2"/>
<path d="M1045 431v54" stroke="#9c9c9c" stroke-width="2.2"/>
<path d="M981.7 395v139" stroke="#a0a0a0" stroke-width="3"/>
<path d="M880 475.6h170M880 485.4h38M940 485.4h22M1017 485.4h35" stroke="#a8a8a8" stroke-width="2"/>
<path d="M882 440h20M882 445h0M885 450v60M941 455v58M1022 485v28" stroke="#b0b0b0" stroke-width="1.2"/>
<path d="M882 513h60M960 513h45M1022 513h28" stroke="#bdbdbd" stroke-width="1.4"/>
<path d="M960.2 485v49M1002.6 485v49M1022 485v27" stroke="#a0a0a0" stroke-width="2"/>
<path d="M962 513v21" stroke="#c8c8c8" stroke-width="0.7"/>
<path d="M966 513v21" stroke="#c8c8c8" stroke-width="0.7"/>
<path d="M970 513v21" stroke="#c8c8c8" stroke-width="0.7"/>
<path d="M974 513v21" stroke="#c8c8c8" stroke-width="0.7"/>
<path d="M978 513v21" stroke="#c8c8c8" stroke-width="0.7"/>
<path d="M982 513v21" stroke="#c8c8c8" stroke-width="0.7"/>
<path d="M986 513v21" stroke="#c8c8c8" stroke-width="0.7"/>
<path d="M990 513v21" stroke="#c8c8c8" stroke-width="0.7"/>
<path d="M994 513v21" stroke="#c8c8c8" stroke-width="0.7"/>
<path d="M998 513v21" stroke="#c8c8c8" stroke-width="0.7"/>
<rect x="886" y="465" width="5" height="10" fill="#9a9a9a"/><rect x="905" y="505" width="7" height="6" fill="#a0a0a0"/>
<path d="M895 495h20M930 495h20M965 500h30M1010 495h25M925 455h25M1015 455h25M895 460h15" stroke="#cfcfcf" stroke-width="1.2"/>
<g fill="#c8c8c8"><rect x="893" y="385" width="8" height="3"/><rect x="925" y="405" width="10" height="3"/><rect x="1010" y="404" width="12" height="3"/><rect x="898" y="448" width="10" height="6"/><rect x="930" y="452" width="9" height="7"/><rect x="1020" y="452" width="9" height="7"/><rect x="965" y="444" width="12" height="3"/><rect x="986" y="444" width="12" height="3"/><rect x="990" y="455" width="10" height="5"/><rect x="884" y="490" width="10" height="8"/><rect x="1030" y="495" width="10" height="4"/><rect x="915" y="493" width="10" height="4"/></g>
</g>
<rect x="870" y="511" width="180" height="80" fill="url(#gr)"/>
</svg>
<svg width="180" height="233" style="left:1130px;top:358px" viewBox="1130 358 180 233">
<defs><filter id="bl3" x="-5%" y="-5%" width="110%" height="110%"><feGaussianBlur stdDeviation="0.55"/></filter></defs>
<rect x="1130" y="358" width="180" height="233" fill="#fff"/>
<g filter="url(#bl3)">
<text text-rendering="geometricPrecision" x="1151.3" y="386.8" font-family="Liberation Sans" font-size="7.7" fill="#333" text-anchor="start" font-weight="normal" stroke="#333" stroke-width="0.25">Job Description and Job Specification</text>
<path d="M1151.5 392.5H1288" stroke="#b4b4b4" stroke-width="1" stroke-dasharray="7 1.3 4 1.3 9 1.3 5 1.3"/>
<path d="M1151.5 395.8H1288" stroke="#b4b4b4" stroke-width="1" stroke-dasharray="5 1.3 8 1.3 3 1.3 10 1.3"/>
<path d="M1151.5 399.1H1288" stroke="#b4b4b4" stroke-width="1" stroke-dasharray="9 1.3 3 1.3 6 1.3 7 1.3"/>
<path d="M1151.5 402.4H1288" stroke="#b4b4b4" stroke-width="1" stroke-dasharray="7 1.3 4 1.3 9 1.3 5 1.3"/>
<path d="M1151.5 405.7H1233.4" stroke="#b4b4b4" stroke-width="1" stroke-dasharray="5 1.3 8 1.3 3 1.3 10 1.3"/>
<path d="M1151.5 412.5H1288" stroke="#b4b4b4" stroke-width="1" stroke-dasharray="7 1.3 4 1.3 9 1.3 5 1.3"/>
<path d="M1151.5 415.8H1253.875" stroke="#b4b4b4" stroke-width="1" stroke-dasharray="5 1.3 8 1.3 3 1.3 10 1.3"/>
<rect x="1197" y="422.7" width="51" height="8.5" fill="#fff" stroke="#9a9a9a" stroke-width="0.8"/>
<text text-rendering="geometricPrecision" x="1222.5" y="428.6" font-family="Liberation Sans" font-size="4" fill="#555" text-anchor="middle" font-weight="bold">Job Analysis</text>
<path d="M1222.5 431.2v6M1186 437h64.4M1186 437v5.5M1250.4 437v5.5" stroke="#777" stroke-width="0.7" fill="none"/>
<rect x="1162.6" y="443.3" width="50.7" height="48" fill="#fff" stroke="#aaa" stroke-width="0.8"/>
<rect x="1226.4" y="443.3" width="50.6" height="48" fill="#fff" stroke="#aaa" stroke-width="0.8"/>
<text text-rendering="geometricPrecision" x="1188" y="447.8" font-family="Liberation Sans" font-size="3.2" fill="#555" text-anchor="middle" font-weight="bold">Job Description</text>
<text text-rendering="geometricPrecision" x="1251.7" y="447.8" font-family="Liberation Sans" font-size="3.2" fill="#555" text-anchor="middle" font-weight="bold">Job Specification</text>
<circle cx="1172" cy="454.7" r="0.7" fill="#666"/><path d="M1175 454.7h10" stroke="#b0b0b0" stroke-width="1" stroke-dasharray="5 1 6 1"/>
<circle cx="1235.5" cy="454.7" r="0.7" fill="#666"/><path d="M1238.5 454.7h15" stroke="#b0b0b0" stroke-width="1" stroke-dasharray="6 1 4 1"/>
<circle cx="1172" cy="459.0" r="0.7" fill="#666"/><path d="M1175 459.0h12" stroke="#b0b0b0" stroke-width="1" stroke-dasharray="5 1 6 1"/>
<circle cx="1235.5" cy="459.0" r="0.7" fill="#666"/><path d="M1238.5 459.0h12" stroke="#b0b0b0" stroke-width="1" stroke-dasharray="6 1 4 1"/>
<circle cx="1172" cy="463.3" r="0.7" fill="#666"/><path d="M1175 463.3h12" stroke="#b0b0b0" stroke-width="1" stroke-dasharray="5 1 6 1"/>
<circle cx="1235.5" cy="463.3" r="0.7" fill="#666"/><path d="M1238.5 463.3h9" stroke="#b0b0b0" stroke-width="1" stroke-dasharray="6 1 4 1"/>
<circle cx="1172" cy="467.59999999999997" r="0.7" fill="#666"/><path d="M1175 467.59999999999997h11" stroke="#b0b0b0" stroke-width="1" stroke-dasharray="5 1 6 1"/>
<circle cx="1235.5" cy="467.59999999999997" r="0.7" fill="#666"/><path d="M1238.5 467.59999999999997h7" stroke="#b0b0b0" stroke-width="1" stroke-dasharray="6 1 4 1"/>
<circle cx="1172" cy="471.9" r="0.7" fill="#666"/><path d="M1175 471.9h16" stroke="#b0b0b0" stroke-width="1" stroke-dasharray="5 1 6 1"/>
<circle cx="1235.5" cy="471.9" r="0.7" fill="#666"/><path d="M1238.5 471.9h17" stroke="#b0b0b0" stroke-width="1" stroke-dasharray="6 1 4 1"/>
<circle cx="1172" cy="476.2" r="0.7" fill="#666"/><path d="M1175 476.2h9" stroke="#b0b0b0" stroke-width="1" stroke-dasharray="5 1 6 1"/>
<circle cx="1235.5" cy="476.2" r="0.7" fill="#666"/><path d="M1238.5 476.2h12" stroke="#b0b0b0" stroke-width="1" stroke-dasharray="6 1 4 1"/>
<circle cx="1172" cy="480.5" r="0.7" fill="#666"/><path d="M1175 480.5h15" stroke="#b0b0b0" stroke-width="1" stroke-dasharray="5 1 6 1"/>
<circle cx="1235.5" cy="480.5" r="0.7" fill="#666"/><path d="M1238.5 480.5h14" stroke="#b0b0b0" stroke-width="1" stroke-dasharray="6 1 4 1"/>
<circle cx="1172" cy="484.8" r="0.7" fill="#666"/><path d="M1175 484.8h8" stroke="#b0b0b0" stroke-width="1" stroke-dasharray="5 1 6 1"/>
<circle cx="1235.5" cy="484.8" r="0.7" fill="#666"/><path d="M1238.5 484.8h18" stroke="#b0b0b0" stroke-width="1" stroke-dasharray="6 1 4 1"/>
<path d="M1151.5 494.2H1288" stroke="#b4b4b4" stroke-width="1" stroke-dasharray="7 1.3 4 1.3 9 1.3 5 1.3"/>
<path d="M1151.5 497.5H1288" stroke="#b4b4b4" stroke-width="1" stroke-dasharray="5 1.3 8 1.3 3 1.3 10 1.3"/>
<path d="M1151.5 500.8H1192.45" stroke="#b4b4b4" stroke-width="1" stroke-dasharray="9 1.3 3 1.3 6 1.3 7 1.3"/>
<text text-rendering="geometricPrecision" x="1151.3" y="511.5" font-family="Liberation Sans" font-size="5.6" fill="#3b8ad8" text-anchor="start" font-weight="normal">Job Description</text>
<path d="M1151.5 518.5H1288" stroke="#b4b4b4" stroke-width="1" stroke-dasharray="7 1.3 4 1.3 9 1.3 5 1.3"/>
<path d="M1151.5 521.8H1288" stroke="#b4b4b4" stroke-width="1" stroke-dasharray="5 1.3 8 1.3 3 1.3 10 1.3"/>
<path d="M1151.5 525.1H1288" stroke="#b4b4b4" stroke-width="1" stroke-dasharray="9 1.3 3 1.3 6 1.3 7 1.3"/>
<path d="M1151.5 528.4H1260.7" stroke="#b4b4b4" stroke-width="1" stroke-dasharray="7 1.3 4 1.3 9 1.3 5 1.3"/>
<path d="M1160 541.0H1288" stroke="#b4b4b4" stroke-width="1" stroke-dasharray="7 1.3 4 1.3 9 1.3 5 1.3"/>
<path d="M1160 544.3H1288" stroke="#b4b4b4" stroke-width="1" stroke-dasharray="5 1.3 8 1.3 3 1.3 10 1.3"/>
<path d="M1160 547.6H1224.0" stroke="#b4b4b4" stroke-width="1" stroke-dasharray="9 1.3 3 1.3 6 1.3 7 1.3"/>
<path d="M1160 552.5H1288" stroke="#b4b4b4" stroke-width="1" stroke-dasharray="7 1.3 4 1.3 9 1.3 5 1.3"/>
<path d="M1160 555.8H1262.4" stroke="#b4b4b4" stroke-width="1" stroke-dasharray="5 1.3 8 1.3 3 1.3 10 1.3"/>
<path d="M1160 561.0H1288" stroke="#b4b4b4" stroke-width="1" stroke-dasharray="7 1.3 4 1.3 9 1.3 5 1.3"/>
<path d="M1160 564.3H1211.2" stroke="#b4b4b4" stroke-width="1" stroke-dasharray="5 1.3 8 1.3 3 1.3 10 1.3"/>
<path d="M1160 570.0H1288" stroke="#b4b4b4" stroke-width="1" stroke-dasharray="7 1.3 4 1.3 9 1.3 5 1.3"/>
<path d="M1160 573.3H1288" stroke="#b4b4b4" stroke-width="1" stroke-dasharray="5 1.3 8 1.3 3 1.3 10 1.3"/>
<path d="M1160 576.6H1236.8" stroke="#b4b4b4" stroke-width="1" stroke-dasharray="9 1.3 3 1.3 6 1.3 7 1.3"/>
</g>
<rect x="1130" y="511" width="180" height="80" fill="url(#gr)"/>
</svg>
<div class="a" style="left:620px;top:527px;font-size:15.5px;line-height:1;color:#fff;white-space:nowrap">Company Profile</div>
<div class="a" style="left:620px;top:550.5px;font-size:12.9px;line-height:1;color:#fff;white-space:nowrap">A few hours ago</div>
<div class="a" style="left:880px;top:527px;font-size:15.5px;line-height:1;color:#fff;white-space:nowrap">Landscape</div>
<div class="a" style="left:880px;top:550.5px;font-size:12.9px;line-height:1;color:#fff;white-space:nowrap">A few hours ago</div>
<div class="a" style="left:1140px;top:527px;font-size:15.5px;line-height:1;color:#fff;white-space:nowrap">Specifications</div>
<div class="a" style="left:1140px;top:550.5px;font-size:12.9px;line-height:1;color:#fff;white-space:nowrap">A few minutes ago</div>
<div class="a" style="left:869px;top:615px;width:182px;height:42px;border:1.3px solid #111;background:#fff"></div>
<svg width="18" height="18" style="left:884px;top:627px" viewBox="0 0 18 18"><path d="M9 1.5v9M5.2 7l3.8 3.8L12.8 7" fill="none" stroke="#111" stroke-width="2.2" stroke-linecap="round" stroke-linejoin="round"/><path d="M1.8 12.2c0 2.8.3 3.6 1.6 3.6h12c.9 0 1-.6 1-1.6s-.7-1.9-1.7-1.9" fill="none" stroke="#111" stroke-width="2.2" stroke-linecap="round"/><circle cx="3" cy="14.8" r="1.9" fill="#111"/></svg>
<div class="a" style="left:907px;top:628.6px;font-size:15.5px;font-weight:bold;line-height:1;color:#111;white-space:nowrap">DOWNLOAD ALL</div>
<!-- /CARDS -->
<!-- /MODAL -->
</body></html>
